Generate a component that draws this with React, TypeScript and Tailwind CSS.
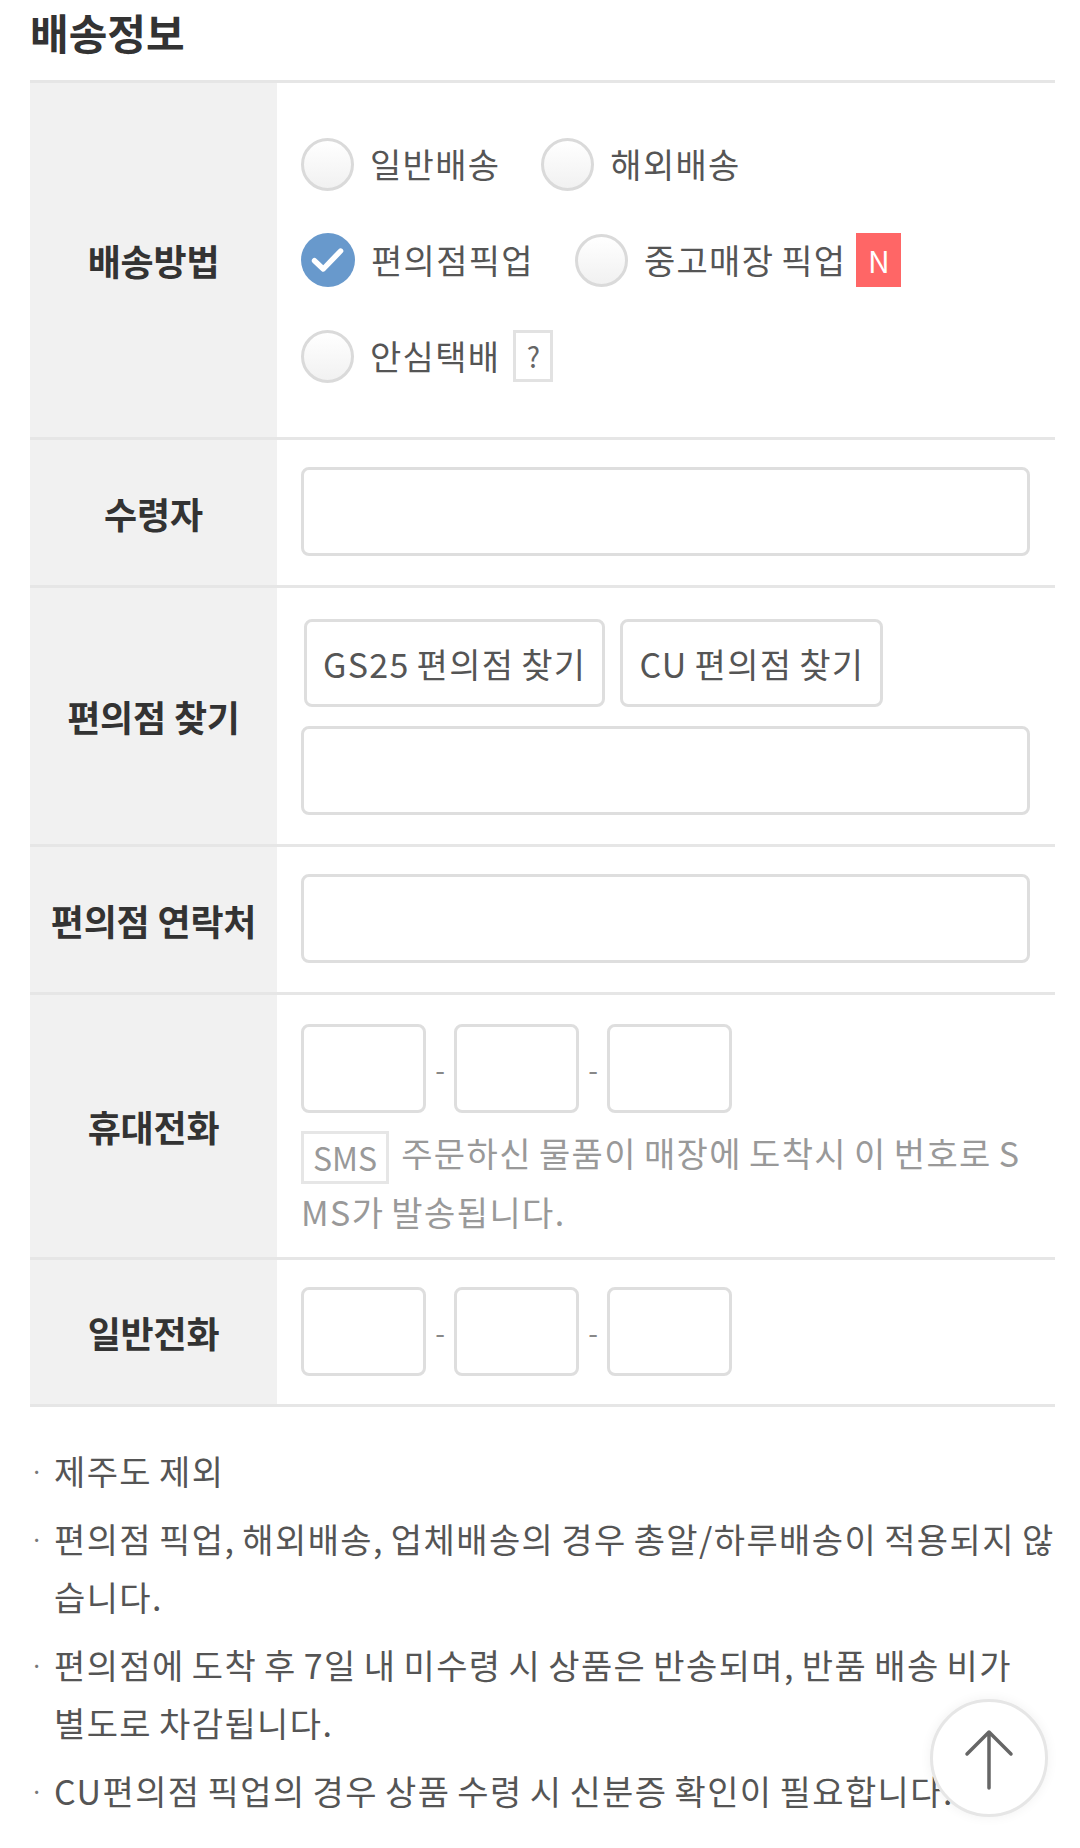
import React from "react";

const FONT = { fontFamily: '"Noto Sans CJK KR", "Noto Sans", sans-serif' };

function Radio({ checked, label, extra }: { checked?: boolean; label: string; extra?: React.ReactNode }) {
  return (
    <div className="flex items-center mr-[41px]">
      {checked ? (
        <span className="w-[54px] h-[54px] rounded-full bg-[#6899cc] flex items-center justify-center shrink-0">
          <svg width="54" height="54" viewBox="0 0 24 24" fill="none">
            <path d="M6 12.3 L9.9 16 L17.6 8" stroke="#fff" strokeWidth="2.4" strokeLinecap="round" strokeLinejoin="round" />
          </svg>
        </span>
      ) : (
        <span className="w-[53px] h-[53px] rounded-full border-[3px] border-[#dadada] bg-linear-to-b from-white to-[#f1f1f1] shrink-0" />
      )}
      <span className="ml-[16px] text-[34px] tracking-[1.3px] [word-spacing:-2px] leading-[40px] text-[#555] whitespace-nowrap">
        {label}
      </span>
      {extra}
    </div>
  );
}

function Label({ children }: { children: React.ReactNode }) {
  return (
    <div className="bg-[#f1f1f1] flex items-center justify-center text-[36px] tracking-[-0.2px] font-bold text-[#333] whitespace-nowrap">
      {children}
    </div>
  );
}

function Field({ className = "" }: { className?: string }) {
  return (
    <input
      type="text"
      className={`h-[89px] border-[3px] border-[#dedede] rounded-[8px] bg-white outline-none ${className}`}
    />
  );
}

function PhoneInputs() {
  return (
    <div className="flex items-center">
      <Field className="w-[125px]" />
      <span className="w-[28px] text-center text-[28px] text-[#888] leading-none">-</span>
      <Field className="w-[125px]" />
      <span className="w-[28px] text-center text-[28px] text-[#888] leading-none">-</span>
      <Field className="w-[125px]" />
    </div>
  );
}

export default function App() {
  const notes: React.ReactNode[] = [
    "제주도 제외",
    "편의점 픽업, 해외배송, 업체배송의 경우 총알/하루배송이 적용되지 않습니다.",
    <>
      편의점에 도착 후 7일 내 미수령 시 상품은 반송되며, 반품 배송 비가
      <br />
      별도로 차감됩니다.
    </>,
    "CU편의점 픽업의 경우 상품 수령 시 신분증 확인이 필요합니다.",
  ];
  return (
    <div className="bg-white min-h-[1848px] pl-[30px] pr-[25px]" style={FONT}>
      <div className="h-[80px] text-[42px] leading-[64px] font-bold text-[#333]">배송정보</div>

      <div className="border-t-[3px] border-[#e6e6e6]">
        {/* 배송방법 */}
        <div className="grid grid-cols-[247px_1fr] border-b-[3px] border-[#e6e6e6]">
          <Label>배송방법</Label>
          <div className="pl-[24px] pr-[25px] py-[33px]">
            <div className="h-[96px] flex items-center">
              <Radio label="일반배송" />
              <Radio label="해외배송" />
            </div>
            <div className="h-[96px] flex items-center">
              <Radio checked label="편의점픽업" />
              <Radio
                label="중고매장 픽업"
                extra={
                  <span className="ml-[10px] w-[45px] h-[54px] bg-[#ff6666] text-white text-[30px] flex items-center justify-center">
                    N
                  </span>
                }
              />
            </div>
            <div className="h-[96px] flex items-center">
              <Radio
                label="안심택배"
                extra={
                  <span className="ml-[13px] w-[40px] h-[52px] border-[3px] border-[#e2e2e2] text-[#666] text-[28px] flex items-center justify-center">
                    ?
                  </span>
                }
              />
            </div>
          </div>
        </div>

        {/* 수령자 */}
        <div className="grid grid-cols-[247px_1fr] border-b-[3px] border-[#e6e6e6]">
          <Label>수령자</Label>
          <div className="pl-[24px] pr-[25px] pt-[27px] pb-[29px]">
            <Field className="w-full block" />
          </div>
        </div>

        {/* 편의점 찾기 */}
        <div className="grid grid-cols-[247px_1fr] border-b-[3px] border-[#e6e6e6]">
          <Label>편의점 찾기</Label>
          <div className="pl-[24px] pr-[25px] pt-[31px] pb-[29px]">
            <div className="flex gap-[15px] pl-[3px]">
              <button className="h-[88px] px-[16px] border-[3px] border-[#dedede] rounded-[8px] bg-white text-[34px] tracking-[1.3px] [word-spacing:-2px] text-[#555] whitespace-nowrap">
                GS25 편의점 찾기
              </button>
              <button className="h-[88px] px-[16px] border-[3px] border-[#dedede] rounded-[8px] bg-white text-[34px] tracking-[1.3px] [word-spacing:-2px] text-[#555] whitespace-nowrap">
                CU 편의점 찾기
              </button>
            </div>
            <Field className="w-full block mt-[19px]" />
          </div>
        </div>

        {/* 편의점 연락처 */}
        <div className="grid grid-cols-[247px_1fr] border-b-[3px] border-[#e6e6e6]">
          <Label>편의점 연락처</Label>
          <div className="pl-[24px] pr-[25px] pt-[27px] pb-[29px]">
            <Field className="w-full block" />
          </div>
        </div>

        {/* 휴대전화 */}
        <div className="grid grid-cols-[247px_1fr] border-b-[3px] border-[#e6e6e6]">
          <Label>휴대전화</Label>
          <div className="pl-[24px] pr-[25px] pt-[29px] pb-[18px]">
            <PhoneInputs />
            <p className="mt-[12px] text-[34px] tracking-[1.4px] [word-spacing:-2px] leading-[55px] text-[#999] break-all">
              <span className="inline-block align-middle h-[53px] leading-[47px] px-[9px] border-[3px] border-[#e6e6e6] text-[32px] tracking-normal [word-spacing:0px] mr-[12px]">
                SMS
              </span>
              주문하신 물품이 매장에 도착시 이 번호로 SMS가 발송됩니다.
            </p>
          </div>
        </div>

        {/* 일반전화 */}
        <div className="grid grid-cols-[247px_1fr] border-b-[3px] border-[#e6e6e6]">
          <Label>일반전화</Label>
          <div className="pl-[24px] pr-[25px] pt-[27px] pb-[28px]">
            <PhoneInputs />
          </div>
        </div>
      </div>

      <ul className="mt-[35px] text-[34px] tracking-[1.4px] [word-spacing:-2px] leading-[58px] text-[#555]">
        {notes.map((t, i) => (
          <li key={i} className="flex mb-[10px]">
            <span className="w-[24px] shrink-0 text-[24px] text-[#777]">·</span>
            <span className="flex-1 break-all">{t}</span>
          </li>
        ))}
      </ul>

      <button className="fixed right-[32px] bottom-[31px] w-[118px] h-[118px] rounded-full bg-white border-[3px] border-[#e6e6e6] shadow-[0_0_12px_rgba(0,0,0,0.06)] flex items-center justify-center">
        <svg width="60" height="64" viewBox="0 0 60 64" fill="none">
          <path d="M30 6 V62 M8 28 L30 6 L52 28" stroke="#666" strokeWidth="3.5" strokeLinecap="round" strokeLinejoin="round" />
        </svg>
      </button>
    </div>
  );
}
